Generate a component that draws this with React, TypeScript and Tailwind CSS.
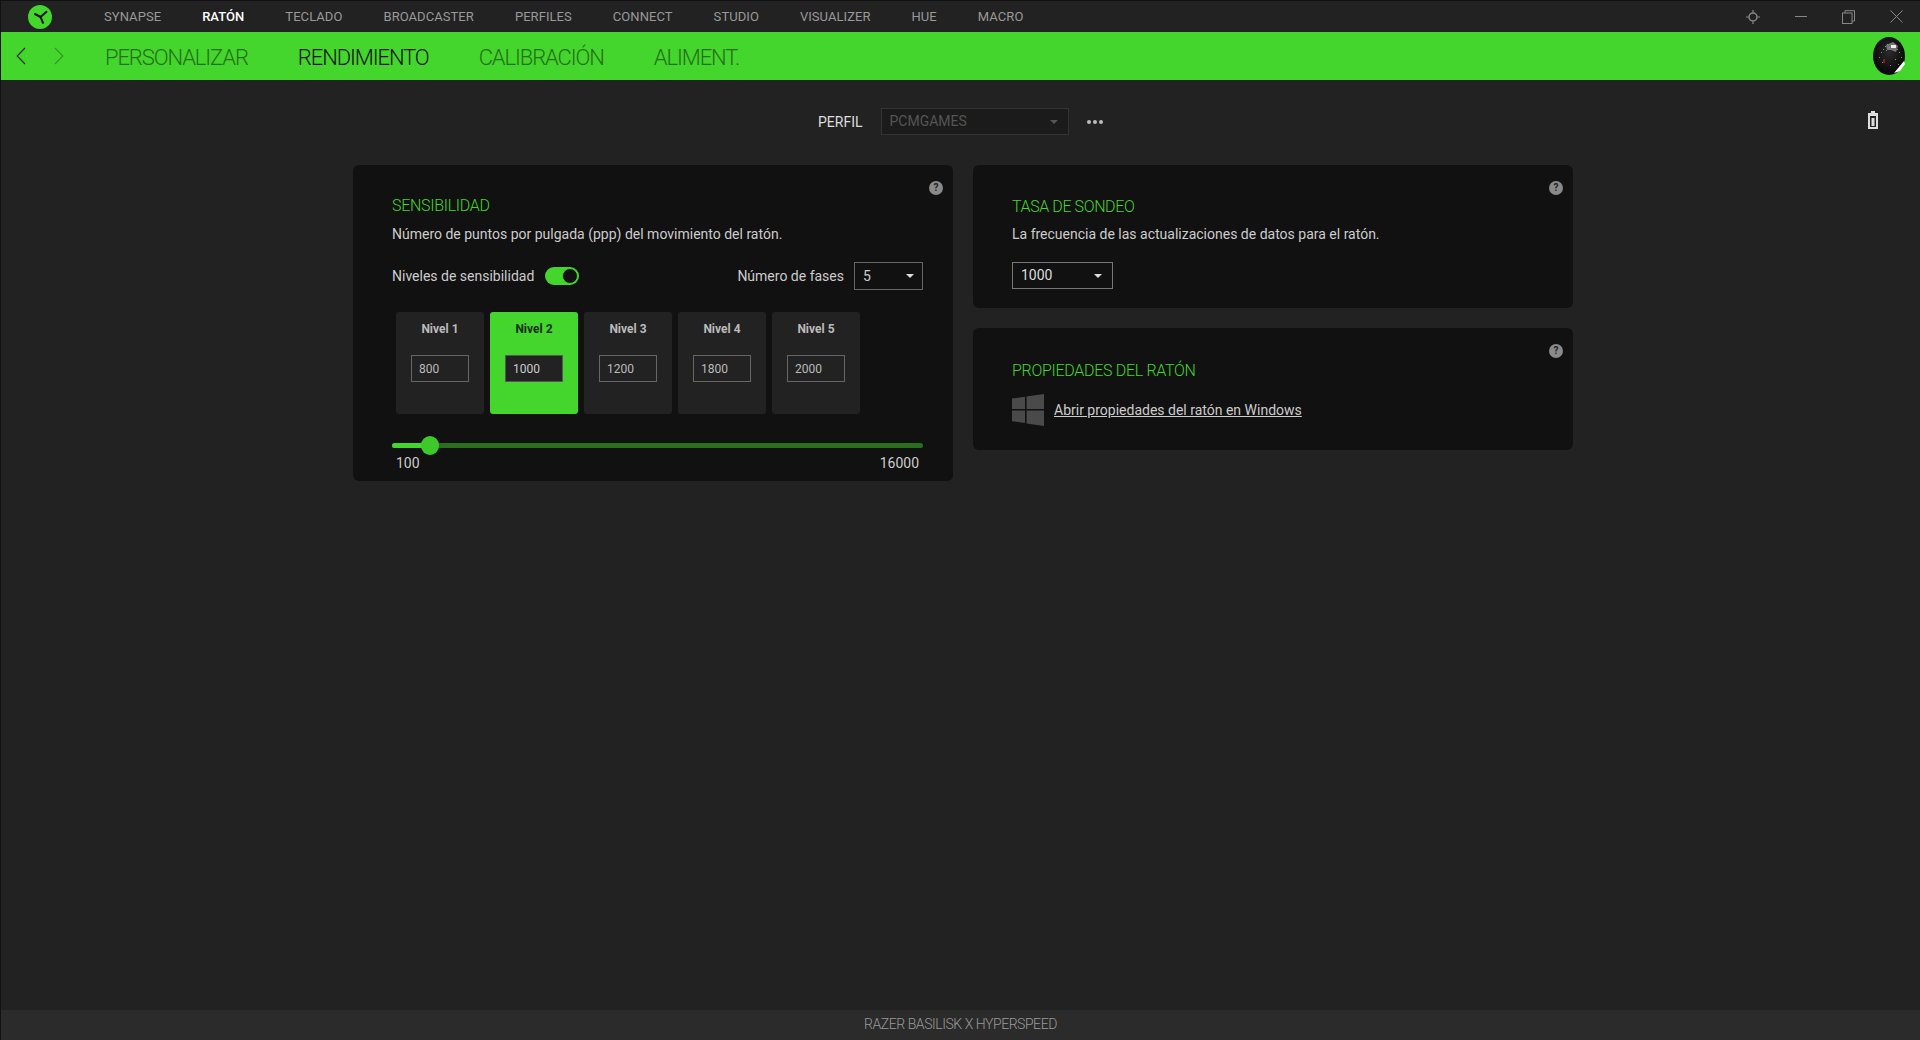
import { useId } from "react"

const tabs = ["SYNAPSE", "RATÓN", "TECLADO", "BROADCASTER", "PERFILES", "CONNECT", "STUDIO", "VISUALIZER", "HUE", "MACRO"]
const subTabs = ["PERSONALIZAR", "RENDIMIENTO", "CALIBRACIÓN", "ALIMENT."]
const niveles = [
  { label: "Nivel 1", value: "800" },
  { label: "Nivel 2", value: "1000", active: true },
  { label: "Nivel 3", value: "1200" },
  { label: "Nivel 4", value: "1800" },
  { label: "Nivel 5", value: "2000" },
]
// brillos del avatar
const specks = [
  [12, 9], [14, 7], [16, 10], [10, 12], [8, 15], [13, 13], [24, 12], [26, 15], [6, 20], [9, 25], [22, 22], [25, 27], [17, 28], [28, 20],
]

function Caret({ color = "border-t-[#ddd]" }: { color?: string }) {
  return <span className={`h-0 w-0 border-x-[4px] border-t-[4px] border-x-transparent ${color}`} />
}

function Help() {
  return (
    <span className="absolute right-[10px] top-[16px] flex h-[14px] w-[14px] items-center justify-center rounded-full bg-[#8a8a8a] text-[10px] font-bold leading-none text-[#222]">
      ?
    </span>
  )
}

function Logo() {
  return (
    <svg width="24" height="24" viewBox="0 0 24 24">
      <circle cx="12" cy="12" r="12" fill="#44d62c" />
      <path d="M12.5 12 L7 9 M12.5 12 L18.5 6.8 M12.5 12 L15 17.8" stroke="#111" strokeWidth="2" strokeLinecap="round" fill="none" />
    </svg>
  )
}

function Avatar() {
  const id = useId()
  return (
    <svg width="32" height="38" viewBox="0 0 32 38">
      <defs>
        <radialGradient id={id} cx="0.5" cy="0.4" r="0.6">
          <stop offset="0" stopColor="#2a2a2a" />
          <stop offset="1" stopColor="#050505" />
        </radialGradient>
      </defs>
      <ellipse cx="16" cy="19" rx="16" ry="19" fill={`url(#${id})`} />
      <path d="M13 8 L20 5 L25 9 L23 15 L18 13 L14 13 Z" fill="#999" opacity="0.7" />
      <path d="M18 8 h5 v3 h-5 z" fill="#eee" />
      {specks.map(([x, y]) => (
        <rect key={`${x}-${y}`} x={x} y={y} width="1" height="1" fill="#888" />
      ))}
      <rect x="10" y="22" width="2" height="4" fill="#8b1a1a" />
      <path d="M21 36 L31 24 L32 27 L27 34 Z" fill="#fff" />
    </svg>
  )
}

function WinLogo() {
  return (
    <svg width="32" height="32" viewBox="0 0 32 32" fill="#4a4a4a">
      <path d="M0 4.6 L13 2.8 V15 H0 Z" />
      <path d="M14.6 2.6 L32 0 V15 H14.6 Z" />
      <path d="M0 16.6 H13 V29 L0 27.2 Z" />
      <path d="M14.6 16.6 H32 V32 L14.6 29.4 Z" />
    </svg>
  )
}

export default function App() {
  return (
    <div className="flex h-[1040px] w-[1920px] flex-col overflow-hidden border-l border-[#111] bg-[#222222] font-['Roboto',sans-serif]">
      {/* barra superior */}
      <div className="flex h-[32px] shrink-0 items-center border-t border-[#111]">
        <div className="ml-[27px] mr-[52px] flex">
          <Logo />
        </div>
        <div className="flex gap-[41px] text-[13px] tracking-[0.06px]">
          {tabs.map((t) => (
            <span key={t} className={t === "RATÓN" ? "font-medium text-white" : "text-[#999]"}>
              {t}
            </span>
          ))}
        </div>
        <div className="ml-auto flex items-center gap-[35px] pr-[17px] text-[#888]">
          <svg width="14" height="14" viewBox="0 0 14 14" fill="none" stroke="#888" strokeWidth="1.5">
            <circle cx="7" cy="7" r="4" />
            <path d="M7 0v2.5M7 11.5V14M0 7h2.5M11.5 7H14" strokeWidth="1.2" />
          </svg>
          <span className="h-px w-[12px] bg-[#888]" />
          <svg width="13" height="14" viewBox="0 0 13 14" fill="none" stroke="#888" strokeWidth="1">
            <rect x="0.5" y="3" width="9.5" height="10.5" />
            <path d="M3 3V0.7H12.5V11H10" />
          </svg>
          <svg width="13" height="13" viewBox="0 0 13 13" stroke="#888" strokeWidth="1">
            <path d="M0.5 0.5L12.5 12.5M12.5 0.5L0.5 12.5" />
          </svg>
        </div>
      </div>

      {/* barra verde */}
      <div className="flex h-[48px] shrink-0 items-center bg-[#44d62c]">
        <svg className="ml-[15px]" width="10" height="18" viewBox="0 0 10 18" fill="none" stroke="#14300f" strokeWidth="1.2">
          <path d="M9 1L1.2 9L9 17" />
        </svg>
        <svg className="ml-[28px]" width="10" height="18" viewBox="0 0 10 18" fill="none" stroke="#2f9c20" strokeWidth="1.2">
          <path d="M1 1L8.8 9L1 17" />
        </svg>
        <div className="ml-[41px] flex gap-[50px] pt-[2px] text-[22px] font-light tracking-[-1.1px]">
          {subTabs.map((t) => (
            <span key={t} className={t === "RENDIMIENTO" ? "text-[#111]" : "text-[#26701a]"}>
              {t}
            </span>
          ))}
        </div>
        <div className="ml-auto flex pr-[15px]">
          <Avatar />
        </div>
      </div>

      {/* contenido */}
      <div className="flex-1 pl-[352px]">
        <div className="relative flex h-[85px] w-[1220px] items-start pl-[465px] pt-[28px]">
          <span className="mr-[18px] mt-[4px] text-[14px] text-[#ddd]">PERFIL</span>
          <div className="flex h-[27px] w-[188px] items-center justify-between border border-[#333] bg-[#1b1b1b] pl-[8px] pr-[10px] text-[14px] text-[#555]">
            PCMGAMES
            <Caret color="border-t-[#555]" />
          </div>
          <div className="ml-[18px] mt-[12px] flex gap-[2px]">
            <span className="h-[4px] w-[4px] rounded-full bg-[#bbb]" />
            <span className="h-[4px] w-[4px] rounded-full bg-[#bbb]" />
            <span className="h-[4px] w-[4px] rounded-full bg-[#bbb]" />
          </div>
          <svg className="absolute right-[-305px] top-[31px]" width="10" height="18" viewBox="0 0 10 18">
            <path d="M3 0h4v2h3v16H0V2h3z" fill="#ddd" />
            <rect x="2" y="5" width="6" height="11" fill="#222" />
            <rect x="3.5" y="7" width="3" height="8" fill="#ddd" />
          </svg>
        </div>

        <div className="flex items-start gap-[20px]">
          {/* sensibilidad */}
          <div className="relative h-[316px] w-[600px] shrink-0 rounded-[6px] bg-[#111111] pl-[39px] pr-[30px] pt-[32px]">
            <Help />
            <h2 className="text-[16px] font-light leading-[18px] tracking-[-0.3px] text-[#44d62c]">SENSIBILIDAD</h2>
            <p className="mt-[10px] text-[14px] leading-[18px] text-[#ccc]">Número de puntos por pulgada (ppp) del movimiento del ratón.</p>
            <div className="mt-[19px] flex h-[28px] items-center text-[14px] text-[#ccc]">
              <span>Niveles de sensibilidad</span>
              <span className="ml-[11px] flex h-[18px] w-[34px] items-center justify-end rounded-full bg-[#44d62c] pr-px">
                <span className="h-[16px] w-[16px] rounded-full border border-[#44d62c] bg-[#111]" />
              </span>
              <span className="ml-auto">Número de fases</span>
              <div className="ml-[10px] flex h-[28px] w-[69px] items-center justify-between border border-[#666] px-[8px]">
                5
                <Caret />
              </div>
            </div>
            <div className="ml-[4px] mt-[22px] flex gap-[6px]">
              {niveles.map((n) => (
                <div
                  key={n.label}
                  className={`flex h-[102px] w-[88px] flex-col items-center rounded-[3px] pt-[9px] ${n.active ? "bg-[#44d62c]" : "bg-[#222222]"}`}
                >
                  <span className={`text-[12px] font-bold leading-[16px] ${n.active ? "text-[#14300f]" : "text-[#bbb]"}`}>{n.label}</span>
                  <div className={`mt-[18px] flex h-[27px] w-[58px] items-center border pl-[7px] text-[12px] ${n.active ? "border-[#555] bg-[#222] text-[#ccc]" : "border-[#666] text-[#bbb]"}`}>
                    {n.value}
                  </div>
                </div>
              ))}
            </div>
            <div className="relative mt-[29px] h-[5px] rounded-full bg-[#2a6e1e]">
              <div className="h-full w-[38px] rounded-full bg-[#44d62c]" />
              <span className="absolute left-[29px] top-[-7px] h-[19px] w-[18px] rounded-full bg-[#3fc829]" />
            </div>
            <div className="mt-[6px] flex justify-between px-[4px] text-[14px] leading-[18px] text-[#ccc]">
              <span>100</span>
              <span>16000</span>
            </div>
          </div>

          <div className="flex w-[600px] shrink-0 flex-col gap-[20px]">
            {/* tasa de sondeo */}
            <div className="relative h-[143px] rounded-[6px] bg-[#111111] px-[39px] pt-[33px]">
              <Help />
              <h2 className="text-[16px] font-light leading-[18px] tracking-[-0.4px] text-[#44d62c]">TASA DE SONDEO</h2>
              <p className="mt-[9px] text-[14px] leading-[18px] text-[#ccc]">La frecuencia de las actualizaciones de datos para el ratón.</p>
              <div className="mt-[19px] flex h-[27px] w-[101px] items-center justify-between border border-[#777] pl-[8px] pr-[10px] text-[14px] text-[#ddd]">
                1000
                <Caret />
              </div>
            </div>
            {/* propiedades */}
            <div className="relative h-[122px] rounded-[6px] bg-[#111111] px-[39px] pt-[34px]">
              <Help />
              <h2 className="text-[16px] font-light leading-[18px] tracking-[-0.3px] text-[#44d62c]">PROPIEDADES DEL RATÓN</h2>
              <div className="mt-[14px] flex items-center gap-[10px]">
                <WinLogo />
                <a className="text-[14px] text-[#ccc] underline">Abrir propiedades del ratón en Windows</a>
              </div>
            </div>
          </div>
        </div>
      </div>

      {/* barra inferior */}
      <div className="flex h-[30px] shrink-0 items-center justify-center bg-[#2b2b2b] pb-px text-[14px] font-light tracking-[-0.45px] text-[#999]">
        RAZER BASILISK X HYPERSPEED
      </div>
    </div>
  )
}
